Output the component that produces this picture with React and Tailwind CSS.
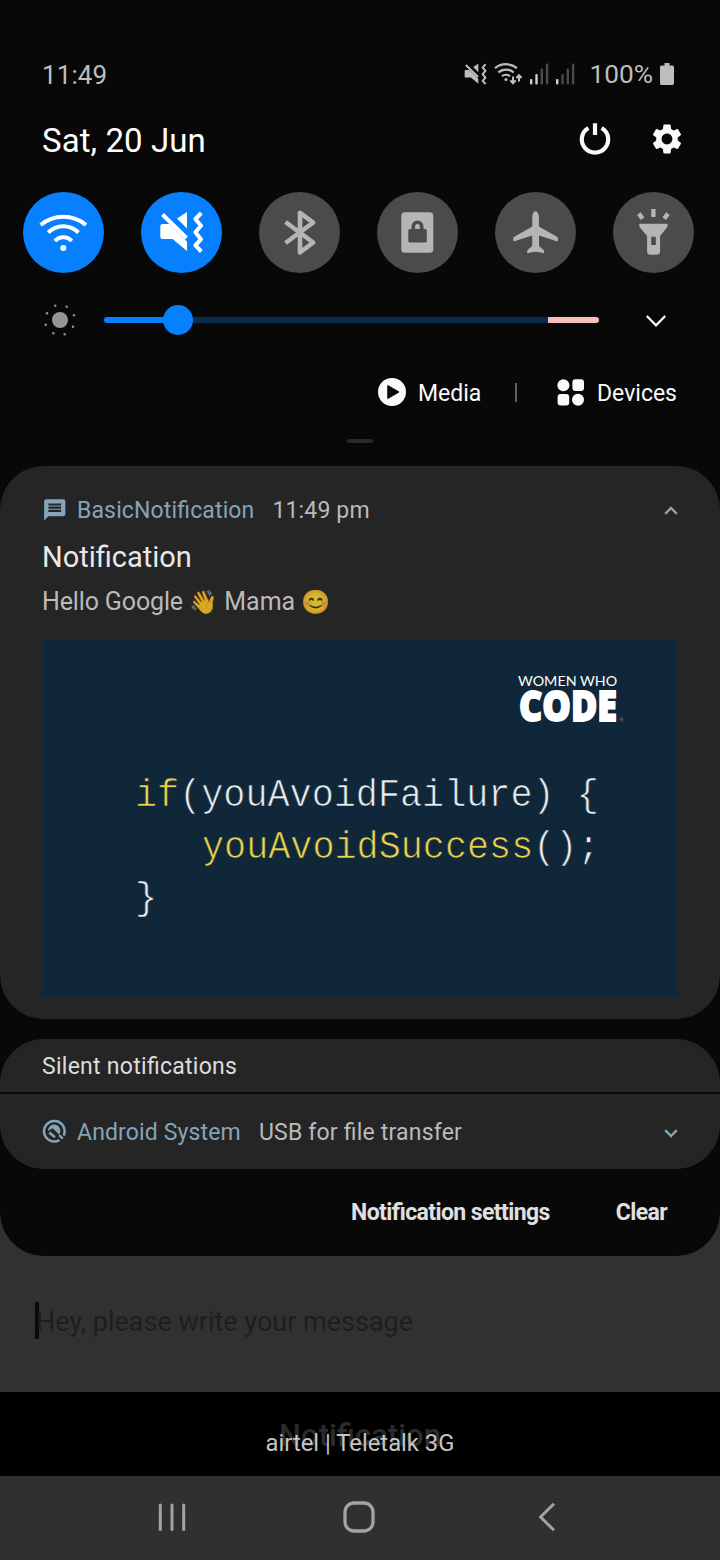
import React from "react";
import { MdMessage, MdSettings } from "react-icons/md";

const tileBase = "flex size-[81px] items-center justify-center rounded-full";

function Tile({ on, children }) {
  return (
    <button className={`${tileBase} ${on ? "bg-[#0680ff] text-white" : "bg-[#4b4b4b] text-[#b5b5b5]"}`}>
      <svg viewBox="0 0 81 81" className="size-[81px]" fill="none" stroke="currentColor">
        {children}
      </svg>
    </button>
  );
}

function Mute() {
  return (
    <>
      <g fill="currentColor" stroke="none">
        <path d="M21.5 32H28.5L46 49.5V59L31.5 47H21.5Q19.3 47 19.3 44.8V34.2Q19.3 32 21.5 32Z" />
        <path d="M36 26.5L46 20V36.5Z" />
      </g>
      <path d="M21.5 22.5L45.5 46" strokeWidth="4" />
      <path d="M60.3 21L54.4 27L60 33.8L54.4 40.3L60 47.2L54.4 53.4L60.3 59.5" strokeWidth="4" strokeLinejoin="round" />
    </>
  );
}

function Signal({ lit }) {
  return (
    <svg viewBox="0 0 19 22" className="h-[22px] w-[19px]">
      {[0, 1, 2, 3].map((i) => (
        <rect key={i} x={i * 5.3} y={[16, 11, 5.5, 0.5][i]} width="2.4" height={[5.5, 10.5, 16, 21][i]} rx="1" fill={i < lit ? "#d0d0d0" : "#4b4b4b"} />
      ))}
    </svg>
  );
}

function StatusBar() {
  return (
    <div className="flex h-[50px] items-center pl-[42px] pr-[46px] text-[26px] text-[#bdbdbd]">
      <span className="grow tracking-[0.1px]">11:49</span>
      <svg viewBox="18 19 45 42" className="mt-[-3px] h-[22px] w-[23px]" fill="none" stroke="currentColor">
        <Mute />
      </svg>
      <svg viewBox="0 0 28 23" className="ml-[7px] mt-[-3px] h-[23px] w-7" fill="none" stroke="currentColor" strokeWidth="2.2">
        <path d="M1 6.2A17 17 0 0 1 23 6.2M4.3 10.5A11.5 11.5 0 0 1 19.7 10.5M8 14.3A6 6 0 0 1 16 14.3" />
        <circle cx="12" cy="17.5" r="1.6" fill="currentColor" stroke="none" />
        <path d="M19 14.5V21M16.3 18.4L19 21.2L21.7 18.4M25 19.5V13.3M22.3 16L25 13.2L27.7 16" strokeWidth="2" />
      </svg>
      <div className="ml-2 mt-[-3px] flex gap-[7px]">
        <Signal lit={2} />
        <Signal lit={1} />
      </div>
      <span className="ml-[14px] text-[26.3px]">100%</span>
      <svg viewBox="0 0 14 22" className="ml-[7px] mt-[-3px] h-[22px] w-[14px]" fill="currentColor">
        <path d="M4.5 0H9.5V2.5H12.5Q14 2.5 14 4V20Q14 22 12.5 22H1.5Q0 22 0 20V4Q0 2.5 1.5 2.5H4.5Z" />
      </svg>
    </div>
  );
}

function Tiles() {
  return (
    <div className="mt-3 flex gap-[37px] pl-[23px]">
      <Tile on>
        <path d="M17.7 33A35.4 35.4 0 0 1 63 33M25.2 40.5A21.5 21.5 0 0 1 55.5 40.5M32 49A11.2 11.2 0 0 1 48.7 49" strokeWidth="4" />
        <circle cx="40.3" cy="56" r="3" fill="currentColor" stroke="none" />
      </Tile>
      <Tile on>
        <Mute />
      </Tile>
      <Tile>
        <path d="M26.5 30L54.2 50.5L41 60.3V20.9L54.2 30.5L26.5 51" strokeWidth="4.6" strokeLinejoin="round" />
      </Tile>
      <Tile>
        <rect x="24.3" y="20.3" width="32" height="40.5" rx="3.5" fill="currentColor" stroke="none" />
        <rect x="31.3" y="37" width="18.5" height="13.5" rx="1.5" fill="#4b4b4b" stroke="none" />
        <path d="M36.3 38V34.5A4.2 4.2 0 0 1 44.7 34.5V38" stroke="#4b4b4b" strokeWidth="3.6" />
      </Tile>
      <Tile>
        <path
          d="M40.6 19.3C42.4 19.3 43.9 22.4 43.9 25V34.6L61.5 44.6Q63 45.6 63 47V48.3Q62.5 49.6 61 49L44 43.6V54L48.4 57.8Q49.8 59.4 48.8 61.2Q44.8 59.9 40.6 59.8Q36.4 59.9 32.4 61.2Q31.4 59.4 32.8 57.8L37.2 54V43.6L20.2 49Q18.7 49.6 18.2 48.3V47Q18.2 45.6 19.7 44.6L37.3 34.6V25C37.3 22.4 38.8 19.3 40.6 19.3Z"
          fill="currentColor"
          stroke="none"
        />
      </Tile>
      <Tile>
        <path
          fillRule="evenodd"
          d="M26.3 31.7H54.5V34.8L47.1 44V59.2Q47.1 62.7 43.6 62.7H37.6Q34.1 62.7 34.1 59.2V44L26.3 34.8ZM38.2 44.8V53H42.8V44.8Z"
          fill="currentColor"
          stroke="none"
        />
        <path d="M40.4 17V25M25.8 21.6L29.6 26.6M55 21.6L51.2 26.6" strokeWidth="4.4" />
      </Tile>
    </div>
  );
}

function Brightness() {
  const dots = [[-4.7, -14.3], [6.7, -13.3], [14, -4.7], [13, 6.7], [4.7, 14.3], [-6.7, 13.3], [-14.3, 4.7], [-13, -6.7]];
  return (
    <div className="mt-[22px] flex h-[50px] items-center pl-[43px]">
      <svg viewBox="-17 -17 34 34" className="size-[34px]" fill="#959595">
        <circle r="8" />
        {dots.map(([x, y], i) => (
          <circle key={i} cx={x} cy={y} r="1.2" />
        ))}
      </svg>
      <div className="relative ml-[27px] flex h-1.5 w-[495px] overflow-visible">
        <div className="w-[74px] rounded-l-full bg-[#0680ff]" />
        <div className="grow bg-[#082d4f]" />
        <div className="w-[51px] rounded-r-[3px] bg-[#f5bfba]" />
        <div className="absolute left-[59px] top-[-12px] size-[30px] rounded-full bg-[#0680ff]" />
      </div>
      <svg viewBox="0 0 22 14" className="ml-[46px] mt-px h-[14px] w-[22px]" fill="none" stroke="#fafafa" strokeWidth="2.3">
        <path d="M1.8 2L11 11.3L20.2 2" />
      </svg>
    </div>
  );
}

function QuickLinks() {
  return (
    <div className="mt-[22px] flex h-[50px] items-center pl-[378px] text-[23px] text-[#fafafa]">
      <svg viewBox="0 0 28 28" className="size-7">
        <circle cx="14" cy="14" r="14" fill="#fafafa" />
        <path d="M9.8 7.5L21 14L9.8 20.5Z" fill="#080808" stroke="#080808" strokeLinejoin="round" />
      </svg>
      <span className="ml-3 mt-[5px] w-[63px] whitespace-nowrap">Media</span>
      <div className="ml-[34px] h-[19px] w-0.5 bg-[#5f5f5f]" />
      <svg viewBox="0 0 27 27" className="ml-10 size-[27px]" fill="#fafafa">
        <circle cx="6.4" cy="6.2" r="6" />
        <rect x="15.4" y="0.3" width="11.6" height="11.6" rx="3" />
        <rect x="0.6" y="15" width="11.6" height="11.6" rx="3" />
        <circle cx="21" cy="20.8" r="6" />
      </svg>
      <span className="ml-[13px] mt-[5px]">Devices</span>
    </div>
  );
}

function Chevron({ up }) {
  return (
    <svg viewBox="0 0 16 10" className="h-2.5 w-4" fill="none" stroke="#84a4b8" strokeWidth="2.4">
      <path d={up ? "M2.2 7.8L8 2L13.8 7.8" : "M2.2 2.2L8 8L13.8 2.2"} />
    </svg>
  );
}

function CodePicture() {
  return (
    <div className="mt-[22px] h-[357px] w-[636px] bg-[#10273a] pt-[33px]">
      <div className="ml-[476px] w-[120px] text-white">
        <div className="h-[15px] whitespace-nowrap font-[Lato] text-[14.3px] leading-[16px]">WOMEN WHO</div>
        <div className="flex h-9 items-end">
          <div className="w-[101px] font-['Open_Sans'] text-[42.5px] font-extrabold leading-9">
            <span className="relative -top-px left-px inline-block origin-left scale-x-[0.845] [-webkit-text-stroke:1.8px_#fff]">CODE</span>
          </div>
          <span className="text-[6px] leading-[8px] text-[#63727d]">®</span>
        </div>
      </div>
      <div className="ml-[93px] mt-[47px] whitespace-pre font-['Liberation_Mono',monospace] text-[36.8px] leading-[51.5px] text-[#e8edf0] [-webkit-text-stroke:0.7px_#10273a]">
        <div className="flex h-[51.5px] scale-y-[1.04]">
          <span className="text-[#e9d34f]">if</span>
          <span>{"(youAvoidFailure) {"}</span>
        </div>
        <div className="flex h-[51.5px] scale-y-[1.04] pl-[67px]">
          <span className="text-[#e9d34f]">youAvoidSuccess</span>
          <span>();</span>
        </div>
        <div className="h-[51.5px] scale-y-[1.04]">{"}"}</div>
      </div>
    </div>
  );
}

function Notification() {
  return (
    <section className="mt-[23px] h-[553px] rounded-[44px] bg-[#252525] px-[42px] pt-[29px]">
      <div className="flex h-[30px] items-center text-[23px]">
        <MdMessage className="-mt-px ml-[-0.5px] size-[25.5px] text-[#84a4b8]" />
        <span className="ml-[10px] mt-0.5 tracking-[0.14px] text-[#84a4b8] [font-feature-settings:'liga']">BasicNotification</span>
        <span className="ml-[18px] mt-0.5 grow tracking-[0.15px] text-[#bababa]">11:49 pm</span>
        <div className="-mr-px mt-0.5">
          <Chevron up />
        </div>
      </div>
      <h1 className="mt-[13px] text-[29px] leading-[38px] text-[#e8e8e8]">Notification</h1>
      <p className="mt-[9px] h-[33px] whitespace-pre text-[25px] leading-[33px] text-[#bababa]">
        <span className="tracking-[-0.14px]">Hello Google </span>
        <span className="text-[23px] opacity-80">👋</span> Mama <span className="text-[23.5px] opacity-80">😊</span>
      </p>
      <CodePicture />
    </section>
  );
}

function SilentNotifications() {
  return (
    <section className="mt-5 overflow-hidden rounded-[44px] text-[23px] [font-feature-settings:'liga']">
      <h2 className="flex h-[53px] items-center bg-[#252525] pl-[42px] pt-[3px] tracking-[0.27px] text-[#dddddd]">Silent notifications</h2>
      <div className="mt-0.5 flex h-[75px] items-center bg-[#252525] px-[42px]">
        <svg viewBox="-12 -12 24 24" className="-mt-0.5 size-6" fill="none" stroke="#84a4b8">
          <path d="M5.5 9.1A10.3 10.3 0 1 1 9.6 4.6" strokeWidth="2.5" />
          <path d="M5.1 4.2L8.8 7.7" strokeWidth="2.4" />
          <path d="M-6 0A6.2 6.2 0 1 1 5.2 3.4L-1.5 -2.7Z" fill="#84a4b8" stroke="none" />
          <path d="M-4.8 1.5L1 6.2" strokeWidth="2.6" />
        </svg>
        <span className="ml-[11px] mt-[3px] tracking-[0.14px] text-[#84a4b8]">Android System</span>
        <span className="ml-[18px] mt-[3px] grow tracking-[0.2px] text-[#bababa]">USB for file transfer</span>
        <div className="-mr-px mt-[3px]">
          <Chevron />
        </div>
      </div>
    </section>
  );
}

export default function App() {
  return (
    <main className="flex h-[1560px] w-[720px] flex-col overflow-hidden bg-[#313131] font-[Roboto,sans-serif]">
      <div className="h-[1256px] shrink-0 overflow-hidden rounded-b-[44px] bg-[#080808] pt-[50px]">
        <StatusBar />
        <header className="flex h-20 items-center pl-[42px] pr-[35px] text-white">
          <h1 className="mt-0.5 grow text-[33px] tracking-[0.08px]">Sat, 20 Jun</h1>
          <svg viewBox="0 0 34 34" className="mt-[-2px] size-[34px]" fill="none" stroke="#fafafa" strokeWidth="4.2">
            <path d="M10.4 6A13.2 13.2 0 1 0 23.6 6M17 1.3V13" />
          </svg>
          <MdSettings className="ml-[37px] mt-[-2px] size-9 text-[#fafafa]" />
        </header>
        <Tiles />
        <Brightness />
        <QuickLinks />
        <div className="ml-[347px] mt-[22px] h-1 w-[26px] rounded-sm bg-[#292929]" />
        <Notification />
        <SilentNotifications />
        <footer className="flex h-[87px] items-center justify-end gap-[66px] pr-[53px] pt-0.5 text-[23px] font-bold tracking-[-0.6px] text-[#e0e0e0] [font-feature-settings:'liga']">
          <span>Notification settings</span>
          <span>Clear</span>
        </footer>
      </div>
      <div className="flex h-[136px] shrink-0 items-center pl-[35px] text-[27px] text-[#1e1e1e]">
        <div className="mt-[-7px] h-[37px] w-1 bg-[#0a0a0a]" />
        <span className="-ml-[3px] mt-[-3px]">Hey, please write your message</span>
      </div>
      <div className="relative flex h-[84px] shrink-0 justify-center bg-black pt-[23px]">
        <span className="text-[31px] font-medium leading-[42px] text-[#2b2b2b]">Notification</span>
        <span className="absolute top-[35px] text-[23.8px] leading-[32px] text-[#c4c4c4]">airtel | Teletalk 3G</span>
      </div>
      <nav className="flex h-[84px] shrink-0 items-center bg-[#303030] pb-0.5 pl-[156px]">
        <svg viewBox="0 0 32 32" className="size-8" stroke="#a3a3a3" strokeWidth="3" strokeLinecap="round">
          <path d="M4.3 4V28.5M16 4V28.5M27.7 4V28.5" />
        </svg>
        <svg viewBox="0 0 34 34" className="ml-[154px] size-[34px]" fill="none" stroke="#a3a3a3" strokeWidth="3.3">
          <rect x="3" y="3" width="28" height="28" rx="9" />
        </svg>
        <svg viewBox="0 0 20 32" className="ml-[161px] h-8 w-5" fill="none" stroke="#a3a3a3" strokeWidth="3">
          <path d="M17 2.7L3.5 16L17 29.3" strokeLinejoin="round" />
        </svg>
      </nav>
    </main>
  );
}
